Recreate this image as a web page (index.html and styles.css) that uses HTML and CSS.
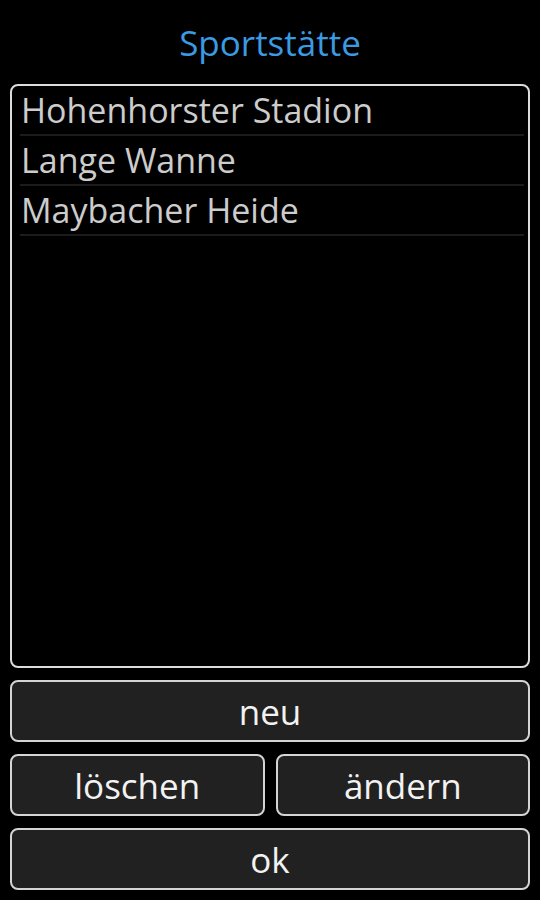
FILE: index.html
```html
<!DOCTYPE html>
<html lang="de">
<head>
    <meta charset="UTF-8">
    <meta name="viewport" content="width=device-width, initial-scale=1.0">
    <title>Sportstätte</title>
    <link rel="stylesheet" href="styles.css">
</head>
<body>
    <div class="dialog">
        <h1 class="title">Sportstätte</h1>

        <ul class="venue-list">
            <li>Hohenhorster Stadion</li>
            <li>Lange Wanne</li>
            <li>Maybacher Heide</li>
        </ul>

        <button class="btn">neu</button>
        <div class="btn-row">
            <button class="btn">löschen</button>
            <button class="btn">ändern</button>
        </div>
        <button class="btn">ok</button>
    </div>
</body>
</html>
```

FILE: styles.css
```css
html, body {
    margin: 0;
    padding: 0;
    background-color: #000000;
}
body {
    font-family: "Open Sans", "Noto Sans", sans-serif;
}
.dialog {
    height: 900px;
    box-sizing: border-box;
    padding: 10px 10px 10px 10px;
    display: flex;
    flex-direction: column;
    gap: 12px;
}
.title {
    margin: 0;
    height: 62px;
    line-height: 66px;
    text-align: center;
    font-size: 35px;
    font-weight: 400;
    color: #3a9ae2;
}
.venue-list {
    flex: 1;
    list-style: none;
    margin: 0;
    padding: 0 4px 0 8px;
    border: 2px solid #dcdcdc;
    border-radius: 8px;
}
.venue-list li {
    height: 48px;
    line-height: 48px;
    font-size: 34px;
    color: #cccccc;
    padding-left: 1px;
    border-bottom: 2px solid #1c1c1c;
}
.btn-row {
    display: flex;
    gap: 11px;
}
.btn-row .btn {
    flex: 1;
}
.btn {
    height: 62px;
    background-color: #212121;
    border: 2px solid #d4d4d4;
    border-radius: 8px;
    color: #f2f2f2;
    font-family: "Open Sans", "Noto Sans", sans-serif;
    font-size: 35px;
    line-height: 60px;
    padding: 0;
}
```
